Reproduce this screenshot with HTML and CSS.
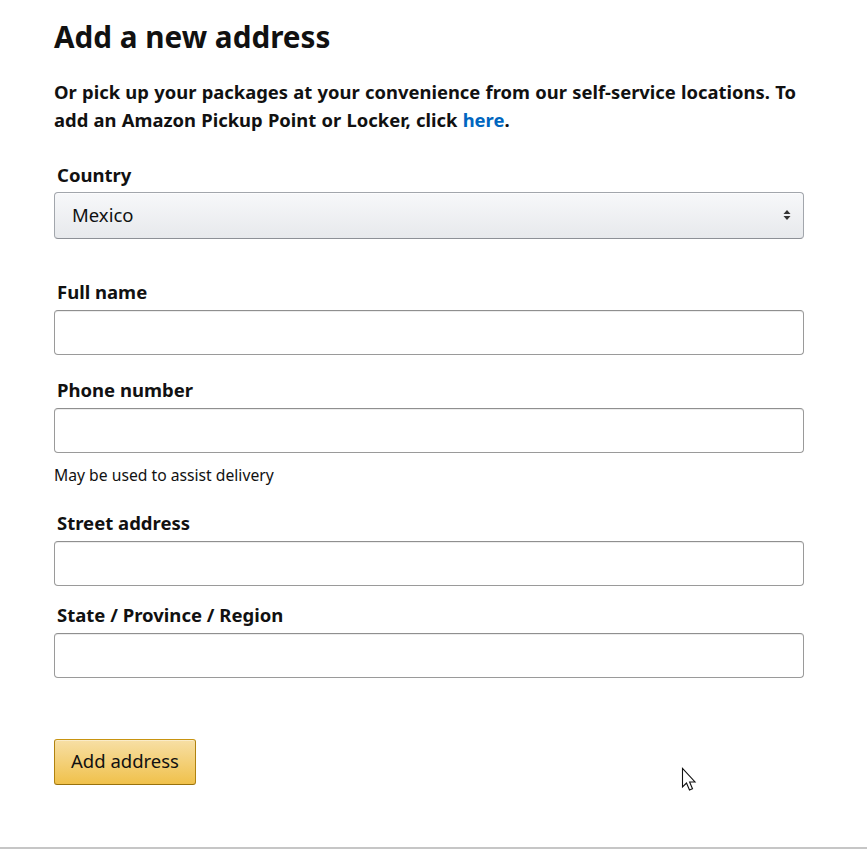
FILE: index.html
```html
<!DOCTYPE html>
<html lang="en">
<head>
<meta charset="utf-8">
<title>Add a new address</title>
<link rel="stylesheet" href="styles.css">
</head>
<body>
<main class="page">
  <h1 class="title">Add a new address</h1>
  <p class="intro">Or pick up your packages at your convenience from our self-service locations. To add an Amazon Pickup Point or Locker, click <a class="link" href="#">here</a>.</p>

  <form class="form">
    <div class="field field-country">
      <label class="label">Country</label>
      <div class="select">
        <span class="select-value">Mexico</span>
        <svg class="select-arrows" width="8" height="12" viewBox="0 0 8 12"><path d="M4 1 L7.5 5 H0.5 Z M4 11 L7.5 7 H0.5 Z" fill="#333"/></svg>
      </div>
    </div>

    <div class="field">
      <label class="label">Full name</label>
      <div class="input"></div>
    </div>

    <div class="field">
      <label class="label">Phone number</label>
      <div class="input"></div>
      <div class="hint">May be used to assist delivery</div>
    </div>

    <div class="field field-street">
      <label class="label">Street address</label>
      <div class="input"></div>
    </div>

    <div class="field">
      <label class="label">State / Province / Region</label>
      <div class="input"></div>
    </div>

    <div class="actions">
      <button class="btn" type="button">Add address</button>
    </div>
  </form>
</main>
<div class="footer-line"></div>
<svg class="cursor" width="20" height="28" viewBox="0 0 20 28"><path d="M1.5 1.5 L1.5 20 L5.5 16 L8.5 23 L11.5 21.8 L8.6 15 L14 15 Z" fill="#fff" stroke="#111" stroke-width="1.1" stroke-linejoin="miter"/></svg>
</body>
</html>
```
FILE: styles.css
```css
html, body {
  margin: 0;
  padding: 0;
  background: #fff;
}
body {
  font-family: "Noto Sans", "Open Sans", sans-serif;
  color: #111;
  height: 849px;
  position: relative;
  overflow: hidden;
}
.page {
  width: 750px;
  padding: 16px 0 0 54px;
}
.title {
  font-size: 29.7px;
  font-weight: 700;
  line-height: 42px;
  margin: 0 0 20px 0;
}
.intro {
  font-size: 18.4px;
  font-weight: 700;
  line-height: 28px;
  margin: 0 0 28px 0;
  word-spacing: 0.5px;
}
.link {
  color: #0066c0;
  text-decoration: none;
}
.form {
  display: flex;
  flex-direction: column;
}
.field {
  display: flex;
  flex-direction: column;
  margin-bottom: 22px;
}
.field-country {
  margin-bottom: 40px;
}
.field-street {
  margin-bottom: 16px;
}
.label {
  font-size: 18.5px;
  font-weight: 700;
  line-height: 26px;
  padding-left: 3px;
  margin-bottom: 5px;
}
.field-country .label {
  margin-bottom: 4px;
}
.select {
  height: 47px;
  box-sizing: border-box;
  border: 1px solid #a2a6ac;
  border-bottom-color: #8d9096;
  border-radius: 4px;
  background: linear-gradient(#f7f8fa, #e7e9ec);
  box-shadow: 0 1px 0 rgba(255,255,255,.6) inset;
  display: flex;
  align-items: center;
  justify-content: space-between;
  padding: 0 12px 2px 17px;
}
.select-value {
  font-size: 18.5px;
  color: #0f1111;
}
.input {
  height: 45px;
  box-sizing: border-box;
  border: 1px solid #9a9a9a;
  border-top-color: #8f8f8f;
  border-radius: 4px;
  box-shadow: 0 1px 0 rgba(255,255,255,.5), 0 1px 0 rgba(0,0,0,.07) inset;
  background: #fff;
}
.hint {
  font-size: 15.7px;
  line-height: 20px;
  margin-top: 12px;
  margin-bottom: 3px;
}
.actions {
  margin-top: 39px;
}
.btn {
  font-family: inherit;
  font-size: 18.5px;
  color: #111;
  height: 46px;
  padding: 0 16px 3px;
  border: 1px solid #a88734;
  border-color: #c89411 #b0820f #99710d;
  border-radius: 3px;
  background: linear-gradient(#f7dfa5, #f0c14b);
  box-shadow: 0 1px 0 rgba(255,255,255,.4) inset;
  cursor: pointer;
}
.footer-line {
  position: absolute;
  left: 0;
  right: 0;
  top: 847px;
  height: 2px;
  background: #c6c6c6;
}
.cursor {
  position: absolute;
  left: 681px;
  top: 767px;
}
```
